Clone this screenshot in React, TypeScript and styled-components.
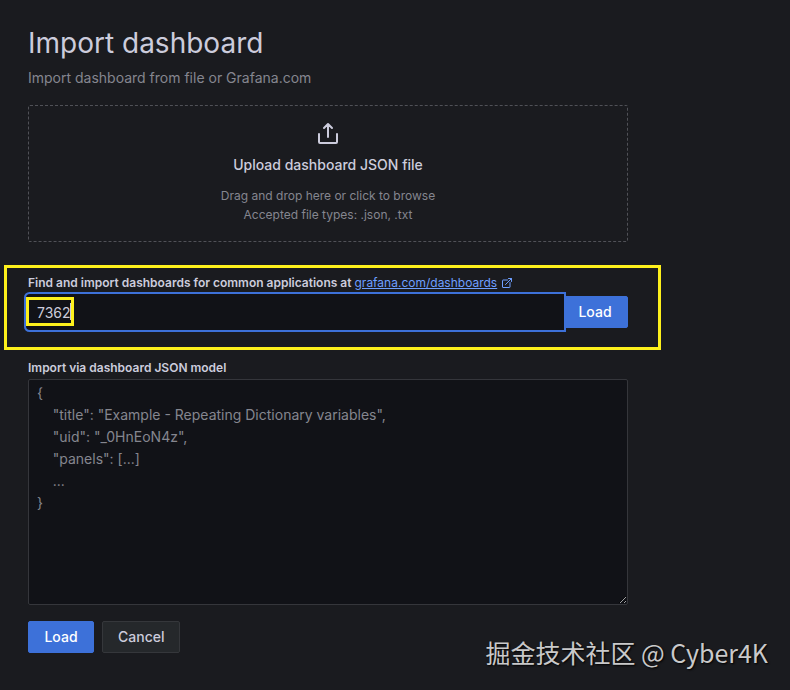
import React from "react";
import styled, { createGlobalStyle } from "styled-components";

const GlobalStyle = createGlobalStyle`
  *, *::before, *::after { box-sizing: border-box; }
  body {
    margin: 0;
    background: #1a1b1f;
    color: #ccccdc;
    font-family: Inter, "Liberation Sans", sans-serif;
    font-size: 14px;
    line-height: 22px;
  }
`;

const Page = styled.main`
  position: relative;
  min-height: 100vh;
  padding: 27px 28px;
`;

const Content = styled.div`
  max-width: 600px;
`;

const Title = styled.h1`
  margin: 0 0 8px;
  font-size: 28px;
  line-height: 32px;
  font-weight: 400;
`;

const Subtitle = styled.p`
  margin: 0 0 16px;
  color: #85868f;
`;

const DropZone = styled.button`
  display: flex;
  flex-direction: column;
  align-items: center;
  width: 100%;
  margin: 0 0 32px;
  padding: 16px 16px 17px;
  border: 1px dashed #505157;
  border-radius: 2px;
  background: transparent;
  color: #ccccdc;
  font: inherit;
`;

const DropTitle = styled.span`
  margin: 8px 0 10px;
  font-weight: 500;
`;

const DropHint = styled.span`
  color: #85868f;
  font-size: 12px;
  line-height: 19px;
`;

const Field = styled.div`
  position: relative;
  margin-bottom: 31px;
`;

const Label = styled.label<{ $tight?: boolean }>`
  display: block;
  margin-bottom: ${(p) => (p.$tight ? 2 : 4)}px;
  font-size: 12px;
  line-height: 18px;
  font-weight: 600;
`;

const DashboardsLink = styled.a`
  color: #6e9fff;
  font-weight: 400;
  text-decoration: underline;

  svg {
    margin-left: 4px;
    vertical-align: -2px;
  }
`;

const InputRow = styled.div`
  display: flex;
`;

const IdInput = styled.input`
  position: relative;
  z-index: 1;
  flex: 1;
  min-width: 0;
  height: 32px;
  padding: 0 8px;
  border: 1px solid #111217;
  border-radius: 2px 0 0 2px;
  outline: none;
  background: #111217;
  box-shadow: 0 0 0 2px #111217, 0 0 0 4px #3d71d9;
  color: #ccccdc;
  font: inherit;
`;

const Button = styled.button<{ $secondary?: boolean }>`
  min-width: 66px;
  height: 32px;
  padding: 0 15px;
  border: 1px solid ${(p) => (p.$secondary ? "#35373b" : "#3d71d9")};
  border-radius: 2px;
  background: ${(p) => (p.$secondary ? "#25282b" : "#3d71d9")};
  color: ${(p) => (p.$secondary ? "#ccccdc" : "#ffffff")};
  font: inherit;
  font-weight: 500;
`;

const JsonArea = styled.textarea`
  display: block;
  width: 100%;
  height: 226px;
  margin-bottom: 16px;
  padding: 2px 8px;
  border: 1px solid #35363b;
  border-radius: 2px;
  background: #111217;
  color: #ccccdc;
  font: inherit;
  resize: both;

  &::placeholder { color: #85868f; opacity: 1; }
`;

const Actions = styled.div`
  display: flex;
  gap: 8px;
`;

const Highlight = styled.div`
  position: absolute;
  inset: -9px -33px -22px -24px;
  border: 3px solid #fdf01c;
  pointer-events: none;
`;

const ValueHighlight = styled.div`
  position: absolute;
  z-index: 2;
  left: -2px;
  bottom: 2px;
  width: 48px;
  height: 29px;
  border: 3px solid #fdf01c;
  pointer-events: none;

  &::after {
    content: "";
    position: absolute;
    top: 3px;
    right: 0;
    width: 1px;
    height: 17px;
    background: #ccccdc;
  }
`;

const Watermark = styled.div`
  position: absolute;
  right: 22px;
  bottom: 20px;
  color: #c9c9ca;
  font-family: "Noto Sans CJK SC", sans-serif;
  font-size: 25px;
  line-height: 36px;
  text-shadow: 1px 1px 2px #000000;
`;

const PLACEHOLDER = `{
    "title": "Example - Repeating Dictionary variables",
    "uid": "_0HnEoN4z",
    "panels": [...]
    ...
}`;

const UploadIcon = () => (
  <svg width="24" height="24" viewBox="0 0 24 24" fill="none" stroke="currentColor" strokeWidth="2" strokeLinecap="round" strokeLinejoin="round" aria-hidden="true">
    <path d="M3 12v8a1 1 0 0 0 1 1h16a1 1 0 0 0 1-1v-8M12 15V3M8 6l4-4 4 4" />
  </svg>
);

const ExternalIcon = () => (
  <svg width="12" height="12" viewBox="0 0 24 24" fill="none" stroke="currentColor" strokeWidth="2" strokeLinecap="round" strokeLinejoin="round" aria-hidden="true">
    <path d="M18 11v9a1 1 0 0 1-1 1H4a1 1 0 0 1-1-1V7a1 1 0 0 1 1-1h9M9 15L21 3M15 3h6v6" />
  </svg>
);

export default function App() {
  return (
    <Page>
      <GlobalStyle />
      <Content>
        <Title>Import dashboard</Title>
        <Subtitle>Import dashboard from file or Grafana.com</Subtitle>
        <DropZone type="button">
          <UploadIcon />
          <DropTitle>Upload dashboard JSON file</DropTitle>
          <DropHint>Drag and drop here or click to browse</DropHint>
          <DropHint>Accepted file types: .json, .txt</DropHint>
        </DropZone>
        <Field>
          <Label htmlFor="dashboard-id">
            Find and import dashboards for common applications at{" "}
            <DashboardsLink href="https://grafana.com/dashboards">
              grafana.com/dashboards
              <ExternalIcon />
            </DashboardsLink>
          </Label>
          <InputRow>
            <IdInput id="dashboard-id" defaultValue="7362" />
            <Button type="button">Load</Button>
          </InputRow>
          <ValueHighlight />
          <Highlight />
        </Field>
        <Label htmlFor="dashboard-json" $tight>Import via dashboard JSON model</Label>
        <JsonArea id="dashboard-json" placeholder={PLACEHOLDER} />
        <Actions>
          <Button type="button">Load</Button>
          <Button type="button" $secondary>Cancel</Button>
        </Actions>
      </Content>
      <Watermark>掘金技术社区 @ Cyber4K</Watermark>
    </Page>
  );
}
